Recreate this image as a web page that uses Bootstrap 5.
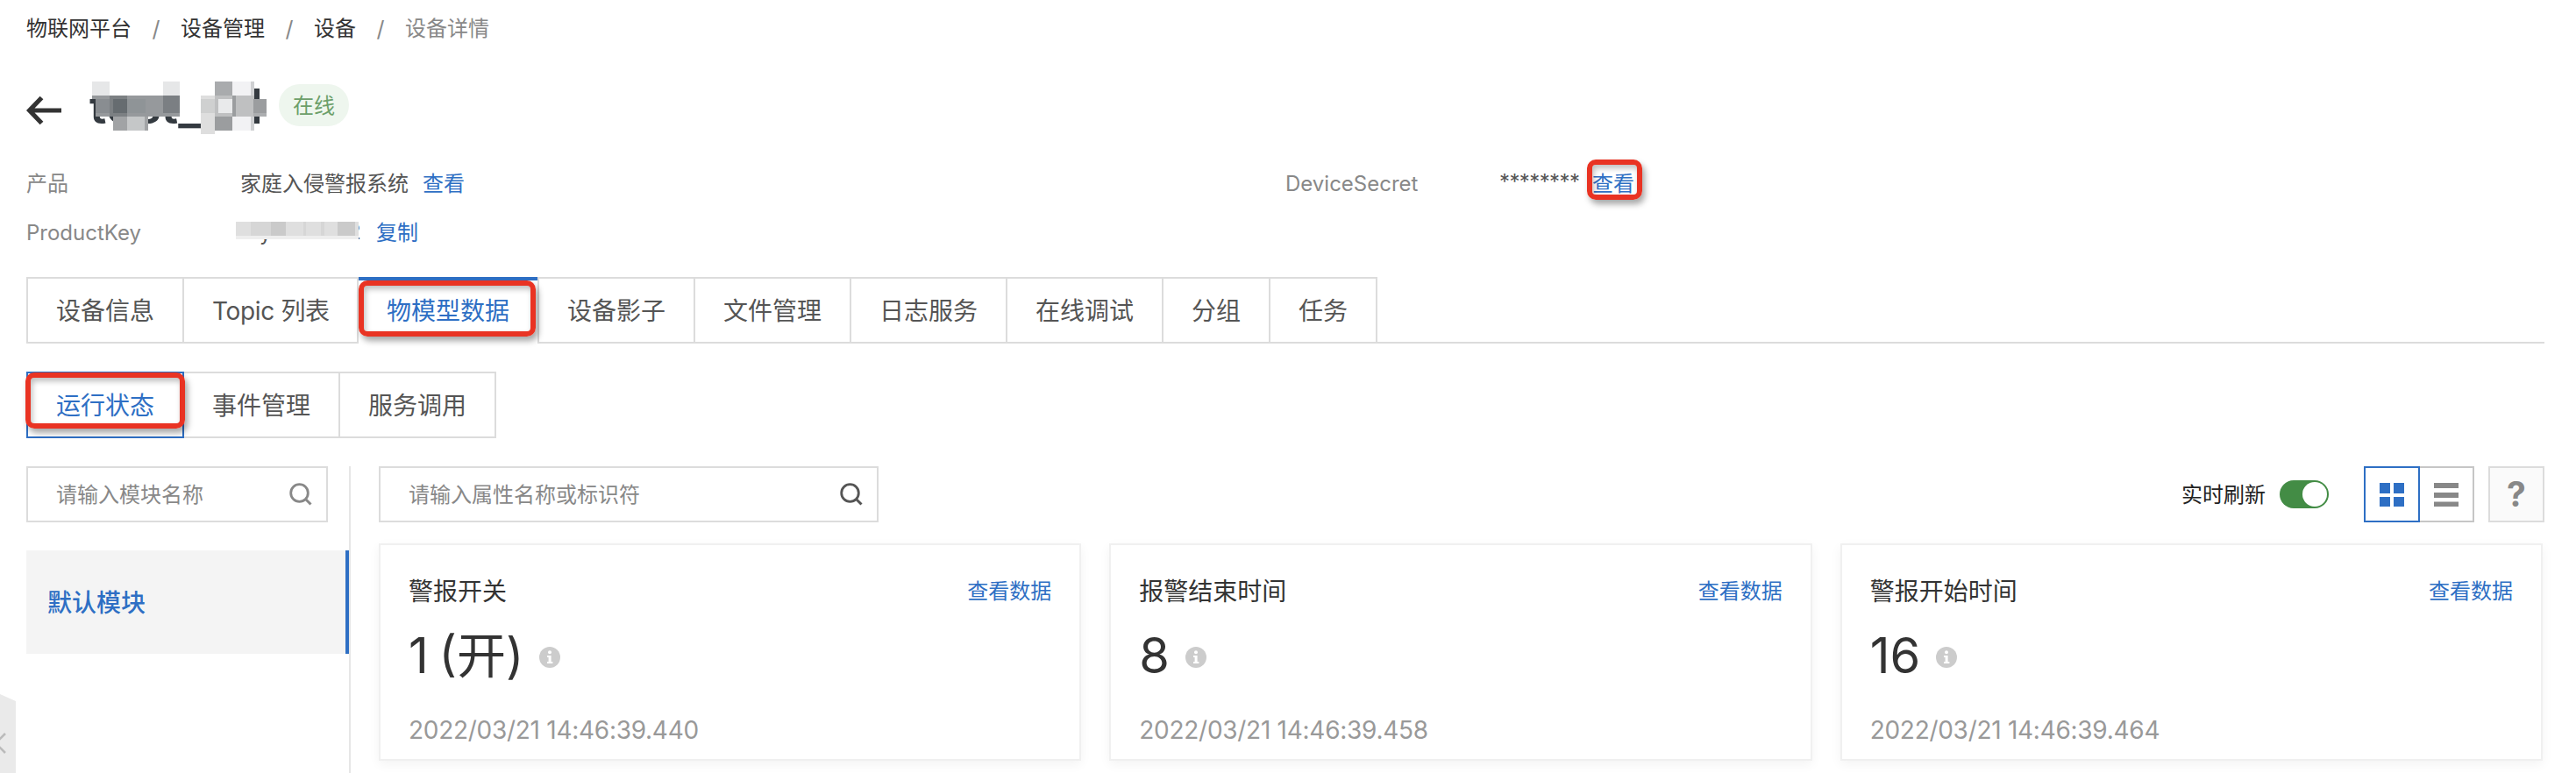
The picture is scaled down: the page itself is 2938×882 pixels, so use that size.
<!DOCTYPE html>
<html lang="zh-CN">
<head>
<meta charset="utf-8">
<title>设备详情</title>
<link rel="stylesheet" href="https://cdn.jsdelivr.net/npm/bootstrap@5.3.0/dist/css/bootstrap.min.css">
<style>
:root{--blue:#2e6fc4;--line:#dcdcdc;--red:#e93323}
body{font-family:Inter,"Noto Sans CJK SC",sans-serif;font-size:24px;line-height:36px;color:#555;background:#fff;height:882px;overflow:hidden}
.link-main{color:var(--blue);text-decoration:none}
.page{padding:16px 36px 0 30px;height:882px}
.crumbs{height:34px;line-height:34px;color:#333}
.crumbs .sep{width:56px;text-align:center;color:#888;font-size:25px}
.crumbs .now{color:#888}
.title-row{height:48px;margin-top:46px}
.pill{height:48px;line-height:50px;width:80px;background:#eef6ee;color:#6c9f6a;border-radius:24px;text-align:center;margin-left:14px}
.info{margin-top:48px;gap:20px}
.info .cell{height:36px}
.info .key{width:244px;color:#888}
.info .half{width:1436px}
.stars{width:106px;letter-spacing:-.6px;line-height:32px}
.masked{margin-left:-6px}
.frame{position:absolute;border:6px solid var(--red);border-radius:10px;box-shadow:3px 5px 7px rgba(0,0,0,.35),inset 2px 4px 6px rgba(0,0,0,.25);z-index:3}
.frame-link{left:-6px;top:-10px;width:63px;height:46px}
.frame-tab{left:0;top:0;width:202px;height:64px}
.frame-sub{left:-3px;top:-1px;width:182px;height:64px}
.tabs{margin-top:32px;height:76px;font-size:28px;box-shadow:inset 0 -2px 0 var(--line);width:2872px}
.tabs .tab,.subtabs .tab{padding:0 32px;height:76px;line-height:74px;border:2px solid var(--line);border-left:0;white-space:nowrap;position:relative}
.tabs .first,.subtabs .first{border-left:2px solid var(--line)}
.tabs .topic{width:199px;padding-right:0;letter-spacing:-.35px}
.tabs .tab.on{border:0;border-top:4px solid var(--blue);background:#fff;color:var(--blue);line-height:70px}
.tabs .after{border-left:2px solid var(--line)}
.subtabs{margin-top:32px;height:76px;font-size:28px}
.subtabs .tab.on{border:2px solid var(--blue);color:var(--blue)}
.main{margin-top:32px;height:350px}
.side{width:370px;border-right:2px solid #e6e6e6}
.search{height:64px;border:2px solid var(--line);padding:0 16px 0 32px;color:#888}
.search span{padding-top:2px}
.search-module{width:344px}
.search-prop{width:570px}
.module{margin-top:32px;height:118px;background:#f4f4f4;border-right:4px solid var(--blue);color:var(--blue);font-size:28px;font-weight:500;padding:2px 0 0 24px}
.content{margin-left:32px;width:2470px}
.tools{height:64px}
.live{color:#222;padding-top:2px}
.switch{width:56px;height:32px;border-radius:16px;background:#438c45;padding:2px;margin-right:40px}
.switch i{width:28px;height:28px;border-radius:50%;background:#fff}
.sq{width:64px;height:64px;border:2px solid var(--line)}
.sq.grid-on{border-color:var(--blue)}
.sq.list-off{width:62px;border-color:#c6c6c6;border-left:0}
.sq.help{margin-left:16px;background:#fafafa;color:#888;font-size:39px;font-weight:700}
.data-cards{margin-top:24px;gap:32px;width:2468px}
.data-card{flex:1 1 0;height:248px;border:2px solid #f0f0f0;box-shadow:0 4px 12px rgba(0,0,0,.05);padding:35px 32px 0}
.data-card .name{font-size:28px;color:#333}
.data-card .value{font-size:56px;line-height:64px;color:#333;margin-top:23px;height:64px;gap:18px;word-spacing:-4px}
.data-card .value svg{margin-top:4px}
.data-card .time{font-size:28px;letter-spacing:-.28px;color:#999;margin-top:35px;white-space:nowrap}
.handle{position:absolute;left:0;top:792px}
</style>
</head>
<body>
<svg width="0" height="0" class="position-absolute">
  <symbol id="info" viewBox="0 0 24 24"><circle cx="12" cy="12" r="12" fill="#ccc"/><circle cx="12" cy="6.3" r="2" fill="#fff"/><path d="M9 10h4.6v7H15.4v2H9v-2h1.6v-5H9z" fill="#fff"/></symbol>
  <symbol id="search" viewBox="0 0 26 26"><circle cx="11.5" cy="11.5" r="9.8" fill="none" stroke="currentColor" stroke-width="2.8"/><path d="M18.5 18.5L24.5 24.5" stroke="currentColor" stroke-width="3"/></symbol>
</svg>
<div class="page">
  <nav class="crumbs d-flex">
    <span>物联网平台</span><span class="sep">/</span><span>设备管理</span><span class="sep">/</span><span>设备</span><span class="sep">/</span><span class="now">设备详情</span>
  </nav>

  <div class="title-row d-flex">
    <svg width="274" height="90" viewBox="30 90 274 90" class="flex-shrink-0" style="margin-top:-6px">
      <path d="M70 126H34M47.5 111.5L33.5 126L47.5 140.500" fill="none" stroke="#333" stroke-width="5.2"/>
      <text x="102" y="141" font-family="Inter" font-size="52" font-weight="600" fill="#343a40" textLength="127" lengthAdjust="spacingAndGlyphs">test_</text>
      <g transform="translate(20 84) scale(.33333)" shape-rendering="crispEdges">
        <path fill="#fff" d="M230 20H555V87H230z"/>
        <path fill="#e6e7e8" d="M256 27h60v48h-60zM497 27h58v48h-58z"/>
        <path fill="#343a40" d="M249 87h18v14h-18zM807 52h20v119h-20z"/>
        <path fill="#96999c" d="M256 75h12v12h-12zM268 75h287v72H268z"/>
        <path fill="#898d91" d="M268 87h48v48h-48z"/>
        <path fill="#7c8083" d="M316 75h60v72h-60z"/>
        <path fill="#666c70" d="M328 87h47v48h-47z"/>
        <path fill="#8f9497" d="M376 87h62v48h-62z"/>
        <path fill="#7b7f83" d="M497 75h58v60h-58z"/>
        <path fill="#a1a3a5" d="M328 147h47v48h-47zM436 147h12v48h-12z"/>
        <path fill="#c5c7c8" d="M375 147h61v48h-61z"/>
        <path fill="#dedede" d="M628 75h48v72h-48zM628 147h48v60h-48z"/>
        <path fill="#cfd0d0" d="M628 87h48v48h-48z"/>
        <path fill="#a9abad" d="M676 27h59v48h-59z"/>
        <path fill="#bfc0c1" d="M676 75h59v72h-59zM747 75h62v72h-62z"/>
        <path fill="#e9eaeb" d="M688 87h47v48h-47z"/>
        <path fill="#f2f2f4" d="M735 27h62v48h-62zM735 147h62v48h-62z"/>
        <path fill="#cfd0d2" d="M797 27h12v48h-12zM797 147h12v48h-12z"/>
        <path fill="#9b9d9f" d="M735 75h12v72h-12zM676 147h59v48h-59zM807 87h49v48h-49z"/>
        <path fill="#acaeb0" d="M807 135h49v12h-49z"/>
      </g>
    </svg>
    <span class="pill">在线</span>
  </div>

  <div class="info d-flex flex-column">
    <div class="d-flex cell">
      <div class="half d-flex"><span class="key">产品</span><span>家庭入侵警报系统</span><a class="link-main ms-3">查看</a></div>
      <div class="d-flex"><span class="key">DeviceSecret</span><span class="stars">********</span><a class="link-main position-relative">查看<b class="frame frame-link"></b></a></div>
    </div>
    <div class="d-flex cell"><span class="key">ProductKey</span>
      <svg class="masked" width="161" height="36" viewBox="268 248 161 36">
        <text x="296" y="274" font-family="Inter" font-size="24" fill="#555">y</text><text x="397" y="273" font-family="Inter" font-size="24" fill="#555">2</text>
        <g transform="translate(256 240) scale(.33333)" shape-rendering="crispEdges">
          <path fill="#dfdfdf" d="M38 39h422v48H38z"/>
          <path fill="#d6d6d6" d="M90 39h70v48h-70zM270 39h10v48h-10zM330 39h12v48h-12z"/>
          <path fill="#cacaca" d="M160 39h50v48h-50zM388 39h60v48h-60z"/>
          <path fill="#eee" d="M38 87h422v12H38z"/>
        </g>
      </svg>
      <a class="link-main">复制</a></div>
  </div>

  <div class="tabs d-flex">
    <div class="tab first">设备信息</div><div class="tab topic">Topic 列表</div>
    <div class="tab on">物模型数据<b class="frame frame-tab"></b></div>
    <div class="tab after">设备影子</div><div class="tab">文件管理</div><div class="tab">日志服务</div><div class="tab">在线调试</div><div class="tab">分组</div><div class="tab">任务</div>
  </div>

  <div class="subtabs d-flex">
    <div class="tab first on">运行状态<b class="frame frame-sub"></b></div><div class="tab">事件管理</div><div class="tab">服务调用</div>
  </div>

  <div class="main d-flex">
    <div class="side">
      <div class="search search-module d-flex align-items-center justify-content-between"><span>请输入模块名称</span><svg width="26" height="26"><use href="#search"/></svg></div>
      <div class="module d-flex align-items-center">默认模块</div>
    </div>
    <div class="content">
      <div class="tools d-flex align-items-center">
        <div class="search search-prop d-flex align-items-center justify-content-between"><span>请输入属性名称或标识符</span><svg width="26" height="26" color="#555"><use href="#search"/></svg></div>
        <span class="live ms-auto me-3">实时刷新</span>
        <span class="switch d-flex justify-content-end"><i></i></span>
        <span class="sq grid-on d-flex align-items-center justify-content-center"><svg width="28" height="28" fill="#2e6fc4"><path d="M0 0h12v12H0zM16 0h12v12H16zM0 16h12v12H0zM16 16h12v12H16z" transform="translate(0 1)"/></svg></span>
        <span class="sq list-off d-flex align-items-center justify-content-center"><svg width="28" height="28" fill="#888"><path d="M0 1h28v6H0zM0 12h28v6H0zM0 22.500h28v5.500H0z"/></svg></span>
        <span class="sq help d-flex align-items-center justify-content-center">?</span>
      </div>
      <div class="data-cards d-flex">
        <div class="data-card"><div class="d-flex justify-content-between"><span class="name">警报开关</span><a class="link-main">查看数据</a></div><div class="value d-flex align-items-center">1 (开)<svg width="24" height="24"><use href="#info"/></svg></div><div class="time">2022/03/21 14:46:39.440</div></div>
        <div class="data-card"><div class="d-flex justify-content-between"><span class="name">报警结束时间</span><a class="link-main">查看数据</a></div><div class="value d-flex align-items-center">8<svg width="24" height="24"><use href="#info"/></svg></div><div class="time">2022/03/21 14:46:39.458</div></div>
        <div class="data-card"><div class="d-flex justify-content-between"><span class="name">警报开始时间</span><a class="link-main">查看数据</a></div><div class="value d-flex align-items-center">16<svg width="24" height="24"><use href="#info"/></svg></div><div class="time">2022/03/21 14:46:39.464</div></div>
      </div>
    </div>
  </div>
</div>
<svg class="handle" width="18" height="90" viewBox="0 0 18 90"><path d="M0 0L18 8V90H0z" fill="#eaeaea"/><path d="M6 45L-5 56L6 67" fill="none" stroke="#bbb" stroke-width="2.6"/></svg>
<script src="https://cdn.jsdelivr.net/npm/bootstrap@5.3.0/dist/js/bootstrap.bundle.min.js"></script>
</body>
</html>
